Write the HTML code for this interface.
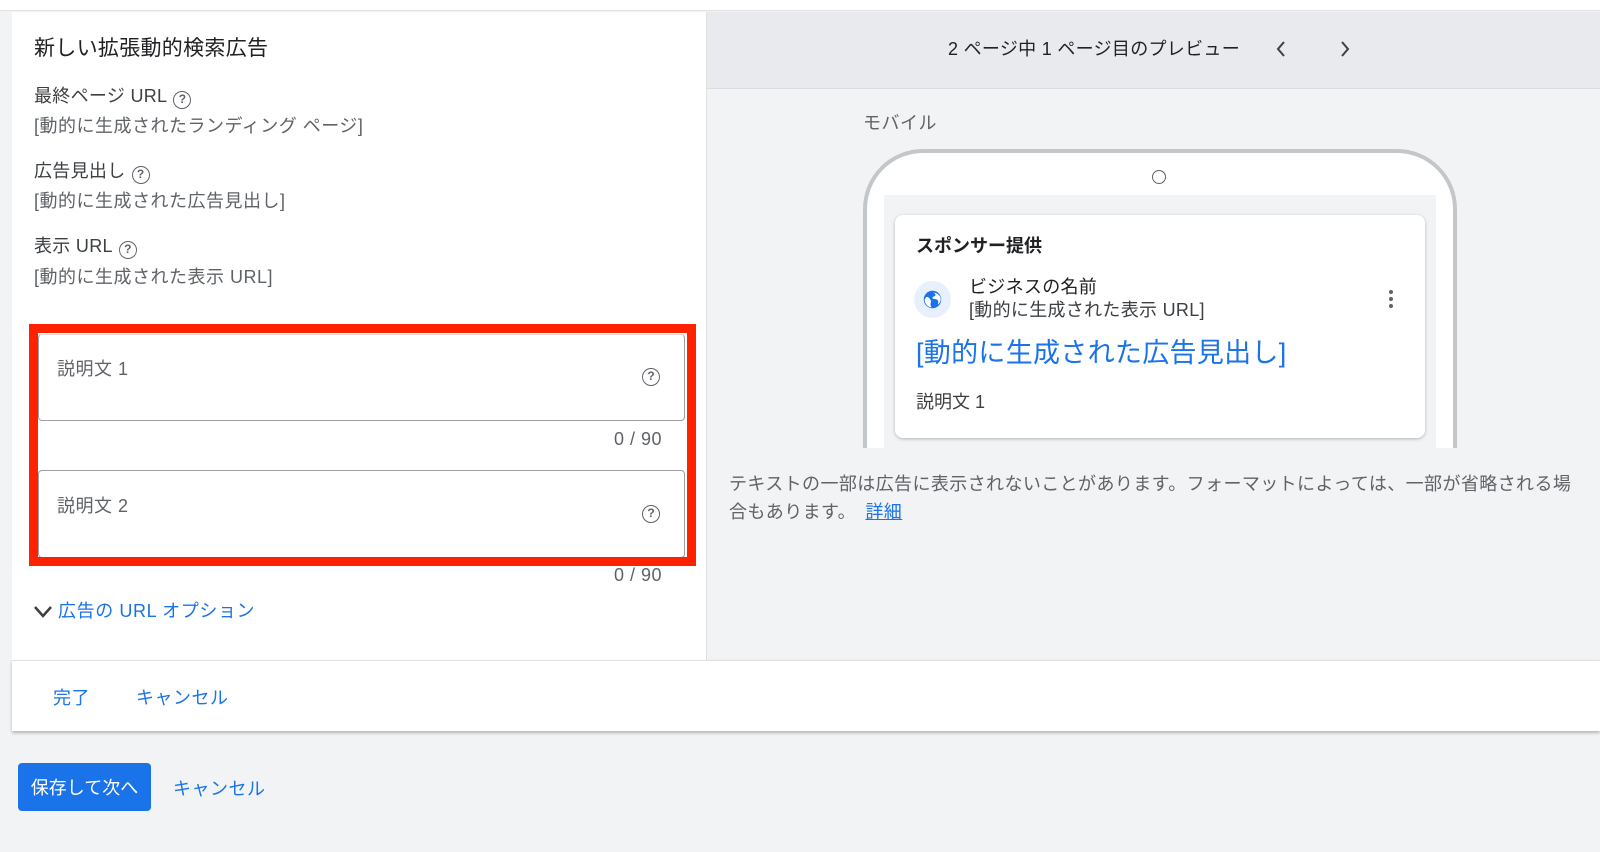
<!DOCTYPE html>
<html><head><meta charset="utf-8"><style>
*{margin:0;padding:0;box-sizing:border-box}
body{width:1600px;height:852px;background:#f1f3f4;position:relative;overflow:hidden;font-family:"Liberation Sans","Noto Sans CJK JP",sans-serif;color:#3c4043}
.a{position:absolute;white-space:nowrap;line-height:1}
.lbl{font-size:18px;color:#3c4043;letter-spacing:.3px}
.val{font-size:18px;color:#5f6368;letter-spacing:.5px}
.blue{color:#1a73e8}
.q{display:inline-block;width:18px;height:18px;border:1.6px solid #5f6368;border-radius:50%;font-size:12px;text-align:center;line-height:15px;color:#5f6368;vertical-align:-1px;margin-left:6px;font-weight:bold;letter-spacing:0}
</style></head><body>
<div class="a" style="left:0;top:0;width:1600px;height:11px;background:#fff;border-bottom:1px solid #e0e0e0"></div>
<div class="a" style="left:12px;top:12px;width:695px;height:649px;background:#fff;border-right:1px solid #e0e0e0"></div>
<div class="a" style="left:707px;top:12px;width:893px;height:77px;background:#e8eaed;border-bottom:1px solid #dadce0"></div>
<div class="a" style="left:12px;top:660px;width:1588px;height:71px;background:#fff;border-top:1px solid #e0e0e0;box-shadow:0 2px 3px rgba(0,0,0,.25)"></div>

<div class="a" style="left:34px;top:38px;font-size:21px;color:#202124;letter-spacing:.3px">新しい拡張動的検索広告</div>
<div class="a lbl" style="left:34px;top:87px">最終ページ URL<span class="q">?</span></div>
<div class="a val" style="left:34px;top:117px">[動的に生成されたランディング ページ]</div>
<div class="a lbl" style="left:34px;top:162px">広告見出し<span class="q">?</span></div>
<div class="a val" style="left:34px;top:192px">[動的に生成された広告見出し]</div>
<div class="a lbl" style="left:34px;top:237px">表示 URL<span class="q">?</span></div>
<div class="a val" style="left:34px;top:268px">[動的に生成された表示 URL]</div>

<div class="a" style="left:38px;top:334px;width:647px;height:87px;border:1px solid #9aa0a6;border-top-color:#dadce0;border-radius:4px;background:#fff"></div>
<div class="a val" style="left:57px;top:360px">説明文 1</div>
<div class="a" style="left:642px;top:367px"><span class="q" style="margin:0">?</span></div>
<div class="a val" style="left:614px;top:430px">0 / 90</div>
<div class="a" style="left:38px;top:470px;width:647px;height:88px;border:1px solid #9aa0a6;border-radius:4px;background:#fff"></div>
<div class="a val" style="left:57px;top:497px">説明文 2</div>
<div class="a" style="left:642px;top:504px"><span class="q" style="margin:0">?</span></div>
<div class="a" style="left:29px;top:324px;width:667px;height:242px;border:9px solid #ff2200"></div>
<div class="a val" style="left:614px;top:566px">0 / 90</div>
<svg class="a" style="left:32px;top:604px" width="22" height="16"><path d="M3 3l8 9 8-9" fill="none" stroke="#3c4043" stroke-width="2.5"/></svg>
<div class="a blue" style="left:58px;top:602px;font-size:18px;letter-spacing:.6px">広告の URL オプション</div>

<div class="a blue" style="left:53px;top:689px;font-size:18px;letter-spacing:.5px">完了</div>
<div class="a blue" style="left:136px;top:689px;font-size:18px;letter-spacing:.5px">キャンセル</div>
<div class="a" style="left:18px;top:763px;width:133px;height:48px;background:#1a73e8;border-radius:4px;color:#fff;font-size:18px;line-height:50px;text-align:center">保存して次へ</div>
<div class="a blue" style="left:173px;top:780px;font-size:18px;letter-spacing:.5px">キャンセル</div>

<div class="a" style="left:948px;top:40px;font-size:18px;color:#202124;letter-spacing:.3px">2 ページ中 1 ページ目のプレビュー</div>
<svg class="a" style="left:1274px;top:40px" width="14" height="18"><path d="M10 2L4 9l6 7" fill="none" stroke="#3c4043" stroke-width="2"/></svg>
<svg class="a" style="left:1338px;top:40px" width="14" height="18"><path d="M4 2l6 7-6 7" fill="none" stroke="#3c4043" stroke-width="2"/></svg>
<div class="a val" style="left:863px;top:114px">モバイル</div>

<div class="a" style="left:863px;top:149px;width:594px;height:340px;border:4px solid #c4c7ca;border-radius:60px 60px 0 0;background:#fff"></div>
<div class="a" style="left:1152px;top:170px;width:14px;height:14px;border:1.5px solid #5f6368;border-radius:50%"></div>
<div class="a" style="left:884px;top:195px;width:552px;height:253px;background:#f1f3f4"></div>
<div class="a" style="left:707px;top:448px;width:893px;height:60px;background:#f1f3f4"></div>
<div class="a" style="left:895px;top:215px;width:530px;height:223px;background:#fff;border-radius:8px;box-shadow:0 1px 3px rgba(60,64,67,.35)"></div>
<div class="a" style="left:916px;top:237px;font-size:18px;font-weight:bold;color:#202124">スポンサー提供</div>
<div class="a" style="left:914px;top:281px;width:37px;height:37px;border-radius:50%;background:#e8f0fe"></div>
<svg class="a" style="left:922px;top:289px" width="21" height="21" viewBox="0 0 24 24"><circle cx="12" cy="12" r="10" fill="#1a73e8"/><path d="M5 9c3 0 4 2 5 4s-1 4 0 6l1 2c-4 0-8-4-8-9zM13 4c2 1 3 3 2 4s-3 0-3 2 3 1 5 2 2 4 1 6c3-2 4-6 3-9-2-3-5-5-8-5z" fill="#fff"/></svg>
<div class="a" style="left:969px;top:278px;font-size:18px;color:#202124;letter-spacing:.3px">ビジネスの名前</div>
<div class="a" style="left:969px;top:301px;font-size:18px;color:#3c4043;letter-spacing:.3px">[動的に生成された表示 URL]</div>
<svg class="a" style="left:1387px;top:289px" width="8" height="20"><circle cx="4" cy="3" r="2" fill="#5f6368"/><circle cx="4" cy="10" r="2" fill="#5f6368"/><circle cx="4" cy="17" r="2" fill="#5f6368"/></svg>
<div class="a blue" style="left:916px;top:340px;font-size:27px;letter-spacing:.3px">[動的に生成された広告見出し]</div>
<div class="a" style="left:916px;top:393px;font-size:18px;color:#3c4043">説明文 1</div>

<div class="a val" style="left:729px;top:475px;letter-spacing:.4px">テキストの一部は広告に表示されないことがあります。フォーマットによっては、一部が省略される場</div>
<div class="a val" style="left:729px;top:503px;letter-spacing:.4px">合もあります。 <span class="blue" style="text-decoration:underline;margin-left:4px">詳細</span></div>
</body></html>
